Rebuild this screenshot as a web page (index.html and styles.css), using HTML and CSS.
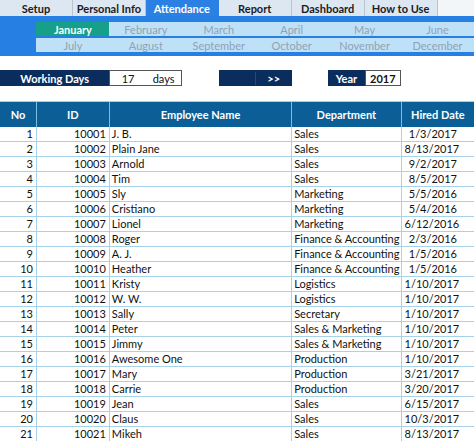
FILE: index.html
```html
<!DOCTYPE html>
<html>
<head>
<meta charset="utf-8">
<link rel="stylesheet" href="styles.css">
</head>
<body>
<div class="sheet">
  <div class="tabs">
    <div class="tab">Setup</div>
    <div class="tab">Personal Info</div>
    <div class="tab active">Attendance</div>
    <div class="tab">Report</div>
    <div class="tab">Dashboard</div>
    <div class="tab">How to Use</div>
    <div class="tab-rest"></div>
  </div>
  <div class="band">
    <div class="months">
      <div class="month current">January</div>
      <div class="month">February</div>
      <div class="month">March</div>
      <div class="month">April</div>
      <div class="month">May</div>
      <div class="month">June</div>
    </div>
    <div class="months">
      <div class="month">July</div>
      <div class="month">August</div>
      <div class="month">September</div>
      <div class="month">October</div>
      <div class="month">November</div>
      <div class="month">December</div>
    </div>
  </div>
  <div class="controls">
    <div class="navy label-wd">Working Days</div>
    <div class="box box-days"><span class="cell">17</span><span class="cell">days</span></div>
    <div class="navy nav-btns"><span class="cell"></span><span class="cell split">&gt;&gt;</span></div>
    <div class="navy label-year">Year</div>
    <div class="box box-year"><span class="cell">2017</span></div>
  </div>
  <table class="grid">
    <colgroup>
      <col class="c1"><col class="c2"><col class="c5"><col class="c3"><col class="c2">
    </colgroup>
    <thead>
      <tr><th>No</th><th>ID</th><th>Employee Name</th><th>Department</th><th>Hired Date</th></tr>
    </thead>
    <tbody>
      <tr><td class="num">1</td><td class="num">10001</td><td>J. B.</td><td>Sales</td><td class="num">1/3/2017</td></tr>
      <tr><td class="num">2</td><td class="num">10002</td><td>Plain Jane</td><td>Sales</td><td class="num">8/13/2017</td></tr>
      <tr><td class="num">3</td><td class="num">10003</td><td>Arnold</td><td>Sales</td><td class="num">9/2/2017</td></tr>
      <tr><td class="num">4</td><td class="num">10004</td><td>Tim</td><td>Sales</td><td class="num">8/5/2017</td></tr>
      <tr><td class="num">5</td><td class="num">10005</td><td>Sly</td><td>Marketing</td><td class="num">5/5/2016</td></tr>
      <tr><td class="num">6</td><td class="num">10006</td><td>Cristiano</td><td>Marketing</td><td class="num">5/4/2016</td></tr>
      <tr><td class="num">7</td><td class="num">10007</td><td>Lionel</td><td>Marketing</td><td class="num">6/12/2016</td></tr>
      <tr><td class="num">8</td><td class="num">10008</td><td>Roger</td><td>Finance &amp; Accounting</td><td class="num">2/3/2016</td></tr>
      <tr><td class="num">9</td><td class="num">10009</td><td>A. J.</td><td>Finance &amp; Accounting</td><td class="num">1/5/2016</td></tr>
      <tr><td class="num">10</td><td class="num">10010</td><td>Heather</td><td>Finance &amp; Accounting</td><td class="num">1/5/2016</td></tr>
      <tr><td class="num">11</td><td class="num">10011</td><td>Kristy</td><td>Logistics</td><td class="num">1/10/2017</td></tr>
      <tr><td class="num">12</td><td class="num">10012</td><td>W. W.</td><td>Logistics</td><td class="num">1/10/2017</td></tr>
      <tr><td class="num">13</td><td class="num">10013</td><td>Sally</td><td>Secretary</td><td class="num">1/10/2017</td></tr>
      <tr><td class="num">14</td><td class="num">10014</td><td>Peter</td><td>Sales &amp; Marketing</td><td class="num">1/10/2017</td></tr>
      <tr><td class="num">15</td><td class="num">10015</td><td>Jimmy</td><td>Sales &amp; Marketing</td><td class="num">1/10/2017</td></tr>
      <tr><td class="num">16</td><td class="num">10016</td><td>Awesome One</td><td>Production</td><td class="num">1/10/2017</td></tr>
      <tr><td class="num">17</td><td class="num">10017</td><td>Mary</td><td>Production</td><td class="num">3/21/2017</td></tr>
      <tr><td class="num">18</td><td class="num">10018</td><td>Carrie</td><td>Production</td><td class="num">3/20/2017</td></tr>
      <tr><td class="num">19</td><td class="num">10019</td><td>Jean</td><td>Sales</td><td class="num">6/15/2017</td></tr>
      <tr><td class="num">20</td><td class="num">10020</td><td>Claus</td><td>Sales</td><td class="num">10/3/2017</td></tr>
      <tr><td class="num">21</td><td class="num">10021</td><td>Mikeh</td><td>Sales</td><td class="num">8/13/2017</td></tr>
    </tbody>
  </table>
</div>
</body>
</html>
```

FILE: styles.css
```css
html, body {
  margin: 0;
  padding: 0;
  background: #ffffff;
  overflow: hidden;
}
.sheet {
  width: 474px;
  font-family: Lato, "Open Sans", "Liberation Sans", sans-serif;
  font-size: 11px;
  color: #111;
}
.tabs {
  display: grid;
  grid-template-columns: repeat(6, 2fr) 1fr;
  height: 16px;
}
.tab {
  background: #dde7f1;
  border-right: 1px solid #b9c4cf;
  font-weight: 700;
  color: #1b1b24;
  display: flex;
  align-items: center;
  justify-content: center;
  font-size: 11px;
}
.tab.active {
  background: #2b80e4;
  color: #ffffff;
  border-right-color: #2b80e4;
}
.tab-rest {
  background: #f3f6f9;
}
.band {
  background: #2680e3;
  padding: 6px 0 4px;
  display: flex;
  flex-direction: column;
  gap: 2px;
}
.months {
  display: grid;
  grid-template-columns: 1fr repeat(6, 2fr);
  height: 14px;
}
.month {
  background: #bfe1f8;
  color: #8fa2b4;
  display: flex;
  align-items: center;
  justify-content: center;
}
.month:first-child {
  grid-column: 2;
}
.month.current {
  background: #16a08a;
  color: #ffffff;
  font-weight: 700;
}
.controls {
  display: grid;
  grid-template-columns: repeat(13, 1fr);
  height: 16px;
  margin-top: 14px;
}
.navy {
  background: #0b2d5d;
  color: #ffffff;
  font-weight: 700;
  display: flex;
  align-items: center;
  justify-content: center;
}
.label-wd { grid-column: 1 / span 3; }
.box {
  border: 1px solid #555;
  display: flex;
  background: #fff;
}
.box-days { grid-column: 4 / span 2; }
.box .cell, .nav-btns .cell {
  flex: 1;
  display: flex;
  align-items: center;
  justify-content: center;
}
.nav-btns { grid-column: 7 / span 2; }
.nav-btns .split { border-left: 1px solid #1d4a80; }
.label-year { grid-column: 10 / span 1; }
.box-year { grid-column: 11 / span 1; font-weight: 700; }
.grid {
  margin-top: 15px;
  width: 474px;
  table-layout: fixed;
  border-collapse: collapse;
}
.c1 { width: 36.46px; }
.c2 { width: 72.92px; }
.c5 { width: 182.3px; }
.c3 { width: 109.4px; }
.grid th {
  background: #0b5e96;
  color: #ffffff;
  font-weight: 700;
  height: 25px;
  padding: 0;
  border-left: 1px solid #7dbde4;
  border-top: 1px solid #9bd0ee;
  text-align: center;
}
.grid th:first-child { border-left: none; }
.grid td {
  height: 14px;
  padding: 0 3px;
  border-bottom: 1px solid #a7d3ea;
  border-left: 1px solid #a7d3ea;
  white-space: nowrap;
  overflow: hidden;
  line-height: 14px;
}
.grid td:first-child { border-left: none; }
.grid td.num { text-align: right; }
.grid td:nth-child(3), .grid td:nth-child(4) { padding-left: 2px; }
.grid td:nth-child(5) { padding-right: 17px; }
```
